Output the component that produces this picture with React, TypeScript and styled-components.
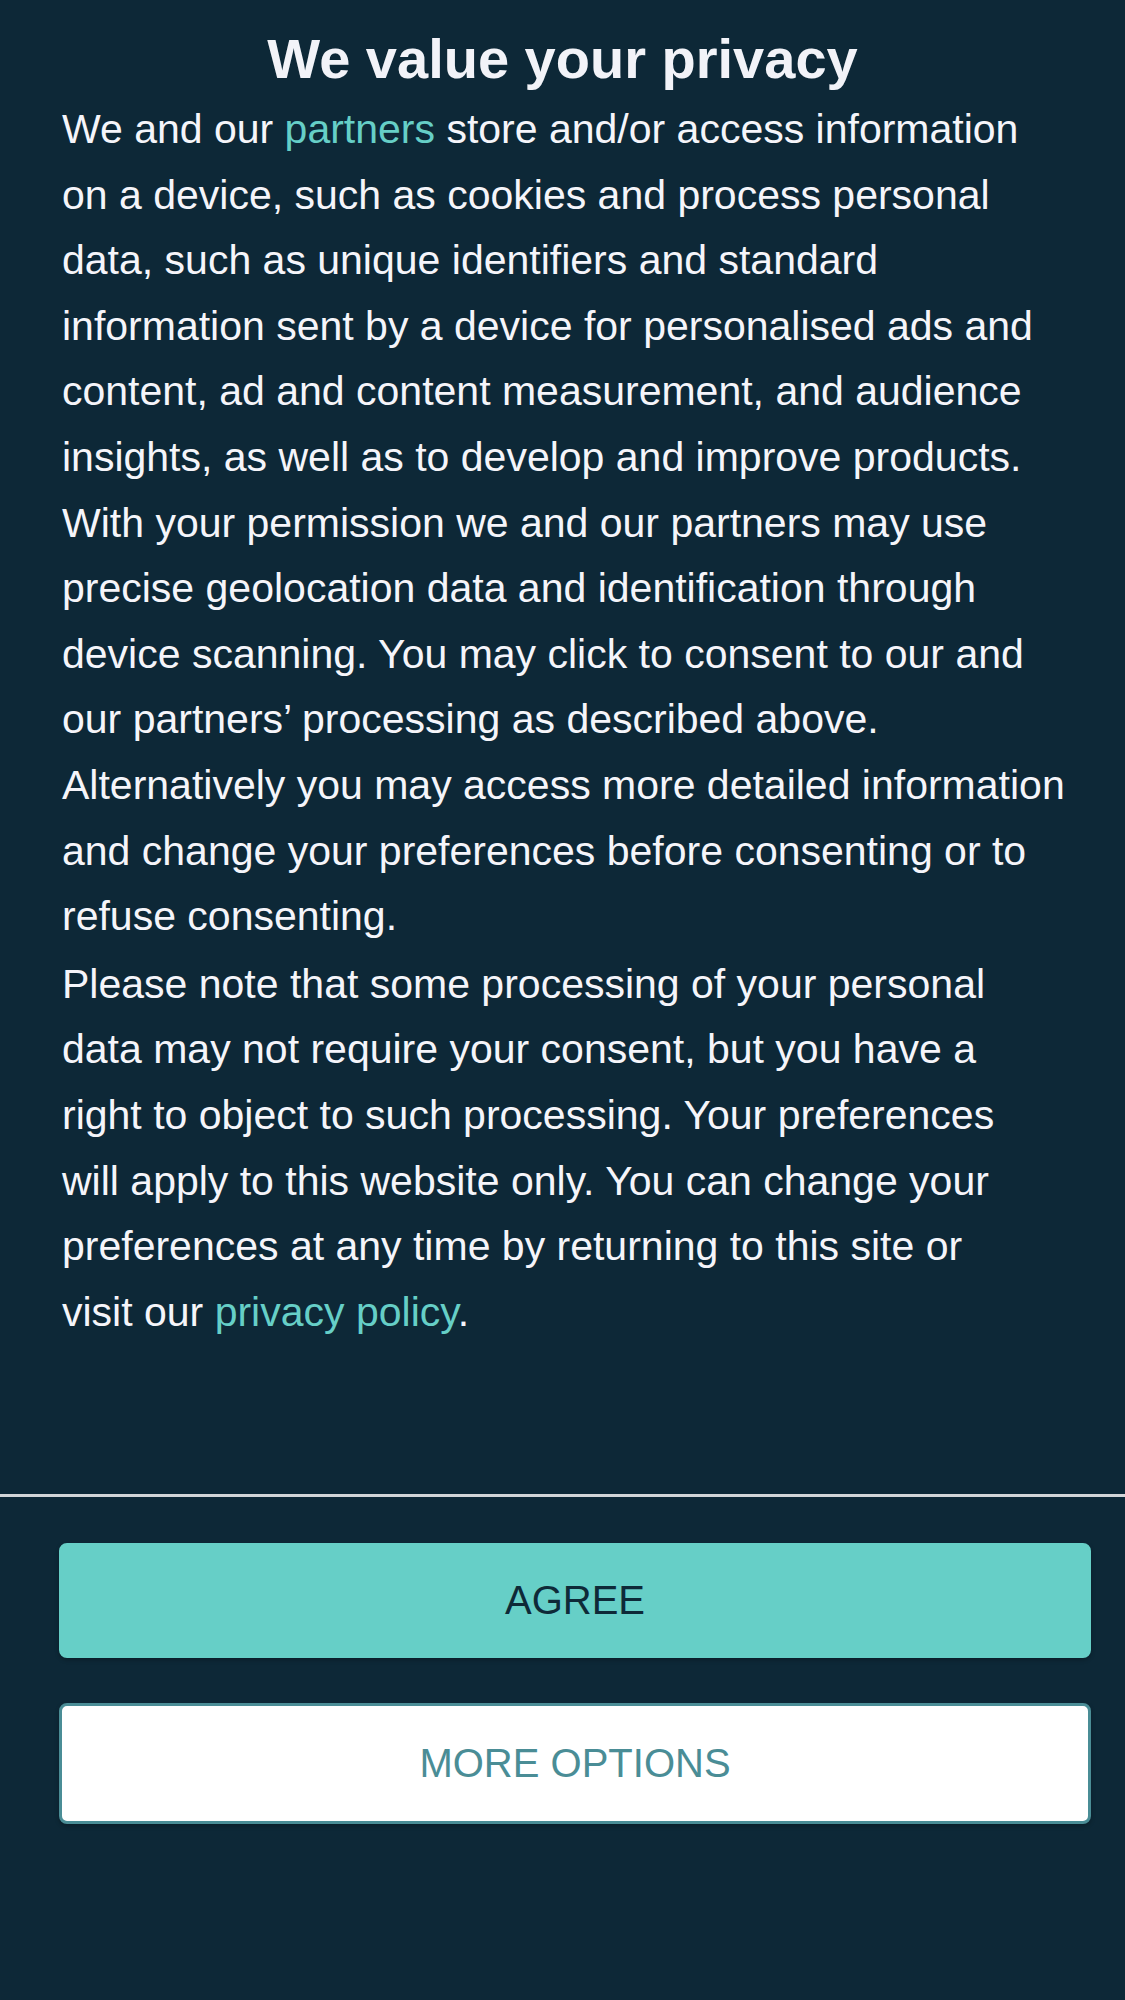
import styled, { createGlobalStyle } from 'styled-components'

const GlobalStyle = createGlobalStyle`
    html, body {
        margin: 0;
        padding: 0;
        background: #0d2837;
    }
    body {
        font-family: 'Liberation Sans', Arial, Helvetica, sans-serif;
        -webkit-font-smoothing: antialiased;
    }
`

const Page = styled.div`
    min-height: 2000px;
    background: #0d2837;
    display: flex;
    flex-direction: column;
`

const Title = styled.h1`
    margin: 0 0 6px;
    padding-top: 27px;
    font-size: 56px;
    line-height: 64px;
    font-weight: 700;
    text-align: center;
    color: #f2f3f8;
`

const Body = styled.div`
    padding: 0 40px 0 62px;
    font-size: 41px;
    line-height: 1.6;
    color: #f5f5fa;
`

const Paragraph = styled.p`
    margin: 0;
    & + & {
        margin-top: 2px;
    }
`

// the reference wraps with Helvetica; keep its breaks line by line
const Line = styled.span`
    display: block;
    white-space: nowrap;
`

const Link = styled.a`
    color: #66cfc7;
    text-decoration: none;
`

const Divider = styled.hr`
    margin: 149px 0 0;
    border: 0;
    height: 3px;
    background: #d2d5d8;
`

const Actions = styled.div`
    display: flex;
    flex-direction: column;
    gap: 45px;
    padding: 46px 34px 0 59px;
`

const Button = styled.button<{ $variant: 'primary' | 'secondary' }>`
    display: flex;
    align-items: center;
    justify-content: center;
    box-sizing: border-box;
    width: 100%;
    height: ${({ $variant }) => ($variant === 'primary' ? '115px' : '121px')};
    border-radius: 8px;
    border: 3px solid
        ${({ $variant }) => ($variant === 'primary' ? '#66cfc7' : '#4a8d96')};
    background: ${({ $variant }) =>
        $variant === 'primary' ? '#66cfc7' : '#ffffff'};
    color: ${({ $variant }) => ($variant === 'primary' ? '#0e2a38' : '#4a8d96')};
    font-family: 'Liberation Sans', Arial, Helvetica, sans-serif;
    font-size: 40px;
    font-weight: 400;
    text-transform: uppercase;
    box-shadow: 0 2px 4px rgba(0, 0, 0, 0.25);
    cursor: pointer;
`

export default function App() {
    return (
        <>
            <GlobalStyle />
            <Page>
                <Title>We value your privacy</Title>
                <Body>
                    <Paragraph>
                        <Line>
                            We and our <Link href='#'>partners</Link> store
                            and/or access information
                        </Line>
                        <Line>
                            on a device, such as cookies and process personal
                        </Line>
                        <Line>
                            data, such as unique identifiers and standard
                        </Line>
                        <Line>
                            information sent by a device for personalised ads
                            and
                        </Line>
                        <Line>
                            content, ad and content measurement, and audience
                        </Line>
                        <Line>
                            insights, as well as to develop and improve
                            products.
                        </Line>
                        <Line>
                            With your permission we and our partners may use
                        </Line>
                        <Line>
                            precise geolocation data and identification through
                        </Line>
                        <Line>
                            device scanning. You may click to consent to our and
                        </Line>
                        <Line>
                            our partners’ processing as described above.
                        </Line>
                        <Line>
                            Alternatively you may access more detailed
                            information
                        </Line>
                        <Line>
                            and change your preferences before consenting or to
                        </Line>
                        <Line>refuse consenting.</Line>
                    </Paragraph>
                    <Paragraph>
                        <Line>
                            Please note that some processing of your personal
                        </Line>
                        <Line>
                            data may not require your consent, but you have a
                        </Line>
                        <Line>
                            right to object to such processing. Your preferences
                        </Line>
                        <Line>
                            will apply to this website only. You can change your
                        </Line>
                        <Line>
                            preferences at any time by returning to this site or
                        </Line>
                        <Line>
                            visit our <Link href='#'>privacy policy</Link>.
                        </Line>
                    </Paragraph>
                </Body>
                <Divider />
                <Actions>
                    <Button type='button' $variant='primary'>
                        Agree
                    </Button>
                    <Button type='button' $variant='secondary'>
                        More options
                    </Button>
                </Actions>
            </Page>
        </>
    )
}
